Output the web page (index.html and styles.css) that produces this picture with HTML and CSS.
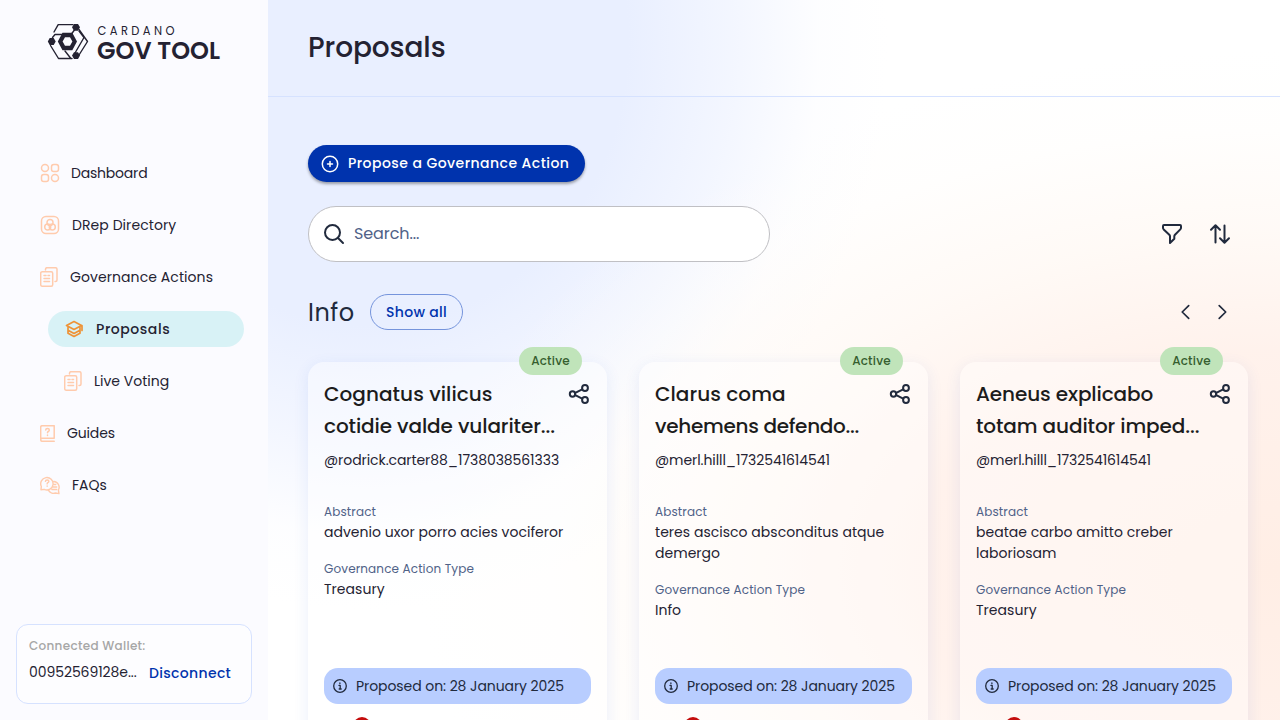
FILE: index.html
```
<!DOCTYPE html>
<html lang="en">
<head>
<meta charset="utf-8">
<title>Proposals</title>
<link rel="stylesheet" href="styles.css">
</head>
<body>
<svg class="defs" width="0" height="0" aria-hidden="true">
  <symbol id="docs" viewBox="0 0 18 20"><path d="M5.500 3V2.200Q5.500.7 7 .7h8.500q1.500 0 1.500 1.500V13q0 1.500-1.500 1.500H15M2.200 4.700h9q1.500 0 1.500 1.500v11.500q0 1.500-1.500 1.500h-9q-1.500 0-1.500-1.500V6.200q0-1.500 1.500-1.500zM4 8.500h2M8 8.500h1.500M4 11.500h5.500M4 14.500h5.500"/></symbol>
  <symbol id="share" viewBox="0 0 24 24"><circle cx="5.500" cy="12" r="2.700"/><circle cx="18" cy="6" r="2.900"/><circle cx="18" cy="18" r="2.900"/><path d="m8.200 10.800 7-3.400M8.200 13.200l7 3.400"/></symbol>
  <symbol id="info" viewBox="0 0 16 16"><circle cx="8" cy="8" r="6.300"/><path d="M7 7.400h1.200V11M7.200 11h2M7.900 4.900v.6"/></symbol>
</svg>
<div class="app">
  <aside class="sidebar">
    <svg class="logo" viewBox="0 0 190 40">
      <g fill="none" stroke="#242232" stroke-width="1.400"><path d="M6 9 10.200 1.600H25M31 6.500l8.500 12L31 32M2.500 22.500 10.500 35.500H24M4.500 14.500 7 11.500H16M23.500 11l4-5.500M31 8l5 6.500-9 15.500M17 28l5.500 7"/></g>
      <path d="M14.500 9.800h9.800l4.700 8.700-4.700 8.700h-9.800L9.800 18.500zM17 14.200l-2.400 4.300L17 22.800h5l2.400-4.300-2.400-4.300z" fill="#242232" fill-rule="evenodd"/>
      <path d="M26 1h4l2 3.300-2 3.400h-4l-2-3.400zM1.700 15.100h4l2 3.400-2 3.400h-4l-1.900-3.400zM26 29.200h4l2 3.400-2 3.400h-4l-2-3.400z" fill="#242232"/>
      <text x="49.500" y="12" font-size="11.500" textLength="77">CARDANO</text>
      <text x="49" y="35.500" font-size="24" font-weight="600" textLength="123" lengthAdjust="spacingAndGlyphs">GOV TOOL</text>
    </svg>
    <nav class="nav">
      <a class="item"><svg class="ico" width="20" height="20" viewBox="0 0 20 20"><circle cx="5" cy="5" r="3.500"/><rect x="11.500" y="1.500" width="7" height="7" rx="2.300"/><rect x="1.500" y="11.500" width="7" height="7" rx="2.300"/><circle cx="15" cy="15" r="3.500"/></svg><span class="t-dash">Dashboard</span></a>
      <a class="item i-drep"><svg class="ico" width="20" height="20" viewBox="0 0 20 20"><rect x="1.500" y="1.500" width="17" height="17" rx="4.500"/><circle cx="10" cy="7.500" r="3"/><circle cx="7.700" cy="12" r="3"/><circle cx="12.300" cy="12" r="3"/></svg><span class="t-drep">DRep Directory</span></a>
      <a class="item i-gov"><svg class="ico" width="18" height="20"><use href="#docs"/></svg><span class="t-gov">Governance Actions</span></a>
      <a class="item sub active"><svg class="ico" width="20" height="20" viewBox="0 0 20 20"><path d="m2.500 6.500 7.500-4 7.500 4-7.500 4zM4 8.500v5.700l6 3.300 6-3.300V8.500M4.500 11.500l5.500 3 5.500-3M18 6.500v5"/></svg><span class="t-prop">Proposals</span></a>
      <a class="item sub live"><svg class="ico" width="18" height="20"><use href="#docs"/></svg><span class="t-live">Live Voting</span></a>
      <a class="item i-guide"><svg class="ico" width="15" height="17" viewBox="0 0 15 17"><path d="M.7 14.500V2.200Q.7.7 2.200.7h12v12.600H2.200q-1.500 0-1.500 1.300 0 1.700 1.500 1.700h12M5.700 5q0-1.500 1.800-1.500t1.800 1.500q0 .9-1 1.500-.8.500-.8 1.300M7.500 10v.4"/></svg><span class="t-guide">Guides</span></a>
      <a class="item i-faq"><svg class="ico" width="20" height="19" viewBox="0 0 21 19"><path d="M1 14l.4-3.500A6.500 6.500 0 1 1 4.600 13.600zM5.700 5.200q0-1.500 1.800-1.500t1.800 1.400q0 .9-1 1.400-.8.500-.8 1.300M7.500 10v.4M14.500 5.300a6 6 0 0 1 4.800 8.900l.6 3.800-3.600-.6a6.300 6.300 0 0 1-7.600-3.300M15 8.500h1.500M14 11h3.500M12.500 13.700h5"/></svg><span class="t-faq">FAQs</span></a>
    </nav>
    <section class="wallet">
      <div class="w-label">Connected Wallet:</div>
      <div class="w-row"><span class="w-id">00952569128e...</span><a class="w-out">Disconnect</a></div>
    </section>
  </aside>
  <main class="main">
    <header class="head"><h1>Proposals</h1></header>
    <div class="body">
      <button class="cta"><svg width="20" height="20" viewBox="0 0 20 20"><circle cx="10" cy="10" r="7.700"/><path d="M10 7.500v5M7.500 10h5"/></svg><span>Propose a Governance Action</span></button>
      <div class="tools">
        <div class="search"><svg width="24" height="24" viewBox="0 0 24 24"><circle cx="10.500" cy="10.500" r="7.500"/><path d="m16 16 5 5"/></svg><span>Search...</span></div>
        <div class="tool-icons">
          <svg width="24" height="24" viewBox="0 0 24 24"><path d="M4 3h16q1 0 1 1v1.700q0 1-.7 1.700L15 12.700q-.7.700-.7 1.700v2.300L10 21v-6.800q0-.8-.7-1.500L3.700 7.400Q3 6.700 3 5.700V4q0-1 1-1z"/></svg>
          <svg width="24" height="24" viewBox="0 0 24 24"><path d="M7.500 20.500V3.500M3 7.800l4.500-4.500L12 7.800M16.500 3.500v17M12 16.200l4.500 4.500 4.500-4.500"/></svg>
        </div>
      </div>
      <div class="section">
        <h2>Info</h2><button class="all">Show all</button>
        <div class="arrows"><svg width="20" height="20" viewBox="0 0 20 20"><path d="m12.700 3.700-6.500 6.300 6.500 6.300"/></svg><svg width="20" height="20" viewBox="0 0 20 20"><path d="m7.200 3.700 6.500 6.300-6.500 6.300"/></svg></div>
      </div>
      <div class="cards">
        <article class="card">
          <span class="badge">Active</span>
          <div class="top"><h3><span class="wide">Cognatus vilicus</span><br>cotidie valde vulariter...</h3><svg class="share" width="24" height="24"><use href="#share"/></svg></div>
          <div class="user">@rodrick.carter88_1738038561333</div>
          <div class="label">Abstract</div><p>advenio uxor porro acies vociferor</p>
          <div class="label type">Governance Action Type</div><p>Treasury</p>
          <div class="date"><svg width="16" height="16"><use href="#info"/></svg><span>Proposed on: 28 January 2025</span></div>
          <div class="dot"></div>
        </article>
        <article class="card">
          <span class="badge">Active</span>
          <div class="top"><h3><span class="wide">Clarus coma</span><br><span class="tight">vehemens defendo...</span></h3><svg class="share" width="24" height="24"><use href="#share"/></svg></div>
          <div class="user">@merl.hilll_1732541614541</div>
          <div class="label">Abstract</div><p>teres ascisco absconditus atque<br>demergo</p>
          <div class="label type">Governance Action Type</div><p>Info</p>
          <div class="date"><svg width="16" height="16"><use href="#info"/></svg><span>Proposed on: 28 January 2025</span></div>
          <div class="dot"></div>
        </article>
        <article class="card">
          <span class="badge">Active</span>
          <div class="top"><h3>Aeneus explicabo<br>totam auditor imped...</h3><svg class="share" width="24" height="24"><use href="#share"/></svg></div>
          <div class="user">@merl.hilll_1732541614541</div>
          <div class="label">Abstract</div><p>beatae carbo amitto creber<br>laboriosam</p>
          <div class="label type">Governance Action Type</div><p>Treasury</p>
          <div class="date"><svg width="16" height="16"><use href="#info"/></svg><span>Proposed on: 28 January 2025</span></div>
          <div class="dot"></div>
        </article>
      </div>
    </div>
  </main>
</div>
</body>
</html>
```
FILE: styles.css
```
* { box-sizing: border-box; }
body { margin: 0; font-family: Poppins, Inter, "Open Sans", sans-serif; font-size: 14px; color: #242232; }
h1, h2, h3, p { margin: 0; font-weight: 400; }
button { font: inherit; }
.defs { display: block; height: 0; }
svg { flex: none; fill: none; stroke: #212a3d; stroke-width: 2; stroke-linecap: round; stroke-linejoin: round; }
.app { display: flex; height: 720px; overflow: hidden; }
span, a { white-space: nowrap; }

.sidebar { width: 268px; flex: none; background: #fbfbff; display: flex; flex-direction: column; padding: 23px 16px 16px; }
.logo { width: 190px; height: 40px; margin-left: 32px; stroke: none; overflow: visible; }
.logo text { fill: #242232; stroke: none; }
.nav { margin-top: 92px; display: flex; flex-direction: column; gap: 16px; }
.item { height: 36px; display: flex; align-items: center; gap: 11px; padding-left: 24px; }
.i-gov, .i-drep, .i-guide, .i-faq { gap: 12px; }
.t-dash { letter-spacing: -.2px; }
.t-drep { letter-spacing: .07px; }
.t-gov { letter-spacing: .08px; }
.t-guide { letter-spacing: -.15px; }
.ico { stroke: #ffcbad; stroke-width: 1.500; }
.sub { margin: 0 8px 0 32px; padding-left: 16px; gap: 12px; }
.active { border-radius: 18px; background: #d8f2f6; font-weight: 500; letter-spacing: .55px; }
.active .ico { stroke: #ee9337; stroke-width: 1.700; }
.wallet { margin-top: auto; height: 80px; border: 1px solid #d6e2ff; border-radius: 12px; background: #fdfdff; padding: 12px; }
.w-label { font-size: 12px; line-height: 18px; font-weight: 500; letter-spacing: .3px; color: #a6a6a6; }
.w-row { display: flex; margin-top: 7px; line-height: 20px; }
.w-id { width: 120px; letter-spacing: -.07px; }
.w-out { color: #0033ad; font-weight: 500; letter-spacing: .33px; padding-top: 1px; }

.main { flex: 1; background:
  radial-gradient(ellipse 860px 520px at 1010px 570px, #ffeee5, rgba(255,241,235,.95) 42%, rgba(255,248,243,.75) 65%, rgba(255,252,249,.3) 85%, rgba(255,253,250,0)),
  radial-gradient(ellipse 520px 570px at 100px 40px, #e9efff, #e9efff 50%, rgba(240,244,255,.8) 70%, rgba(250,251,255,.4) 87%, rgba(255,255,255,0)), #fff; }
.head { height: 97px; border-bottom: 1px solid #d6e2ff; padding: 26px 40px 0; }
h1 { font-size: 28px; line-height: 44px; font-weight: 500; letter-spacing: -.1px; }
.body { padding: 48px 32px 0 40px; }
.cta { display: flex; align-items: center; gap: 8px; width: 277px; height: 37px; padding: 0 12px; border: 0; border-radius: 19px; background: #0033ad; color: #fff; font-weight: 500; letter-spacing: .45px; box-shadow: 0 2px 3px rgba(0,0,0,.35); }
.cta svg { stroke: #fff; stroke-width: 1.500; }
.tools { display: flex; justify-content: space-between; align-items: center; margin-top: 24px; }
.search { width: 462px; height: 56px; display: flex; align-items: center; gap: 8px; padding: 0 13px 1px; border: 1px solid #c0c0c4; border-radius: 28px; background: #fff; font-size: 16px; letter-spacing: -.1px; color: #506288; }
.tool-icons { display: flex; gap: 24px; padding-right: 16px; }
.section { display: flex; align-items: center; height: 36px; margin-top: 32px; }
h2 { width: 62px; font-size: 24px; letter-spacing: .5px; color: #212a3d; }
.all { width: 93px; height: 36px; padding: 0; border: 1px solid #7594dc; border-radius: 18px; background: transparent; color: #0033ad; font-weight: 500; letter-spacing: .3px; }
.arrows { margin-left: auto; display: flex; gap: 16px; padding-right: 16px; }
.arrows svg { stroke-width: 1.700; }
.cards { display: grid; grid-template-columns: 299px 289px 288px; gap: 32px; margin-top: 32px; }
.card { position: relative; height: 456px; display: flex; flex-direction: column; padding: 16px; border-radius: 16px; background: rgba(255,255,255,.4); box-shadow: 0 4px 15px rgba(47,98,220,.1); }
.badge { position: absolute; top: -15px; right: 25px; width: 63px; height: 28px; line-height: 28px; border-radius: 14px; text-align: center; background: #c0e4ba; color: #365e2f; font-size: 12px; font-weight: 500; letter-spacing: .2px; }
.top { display: flex; justify-content: space-between; }
h3 { font-size: 20px; line-height: 32px; font-weight: 500; letter-spacing: -.1px; color: #1c1c1c; }
.wide { letter-spacing: .06px; }
.tight { letter-spacing: -.3px; }
.share { margin: 4px 0 0; }
.user { margin-top: 8px; line-height: 20px; letter-spacing: -.07px; }
.label { margin-top: 34px; font-size: 12px; line-height: 16px; padding-bottom: 2px; letter-spacing: .13px; color: #506288; }
.label.type { margin-top: 18px; }
.card p { line-height: 21px; letter-spacing: .03px; }
.date { margin-top: auto; height: 36px; flex: none; display: flex; align-items: center; gap: 8px; padding-left: 8px; border-radius: 14px; background: #b8cdff; letter-spacing: -.07px; color: #212a3d; }
.date svg { stroke-width: 1.300; }
.dot { width: 18px; height: 18px; flex: none; margin: 13px 0 67px 29px; border-radius: 50%; background: #c40d0d; }
```
